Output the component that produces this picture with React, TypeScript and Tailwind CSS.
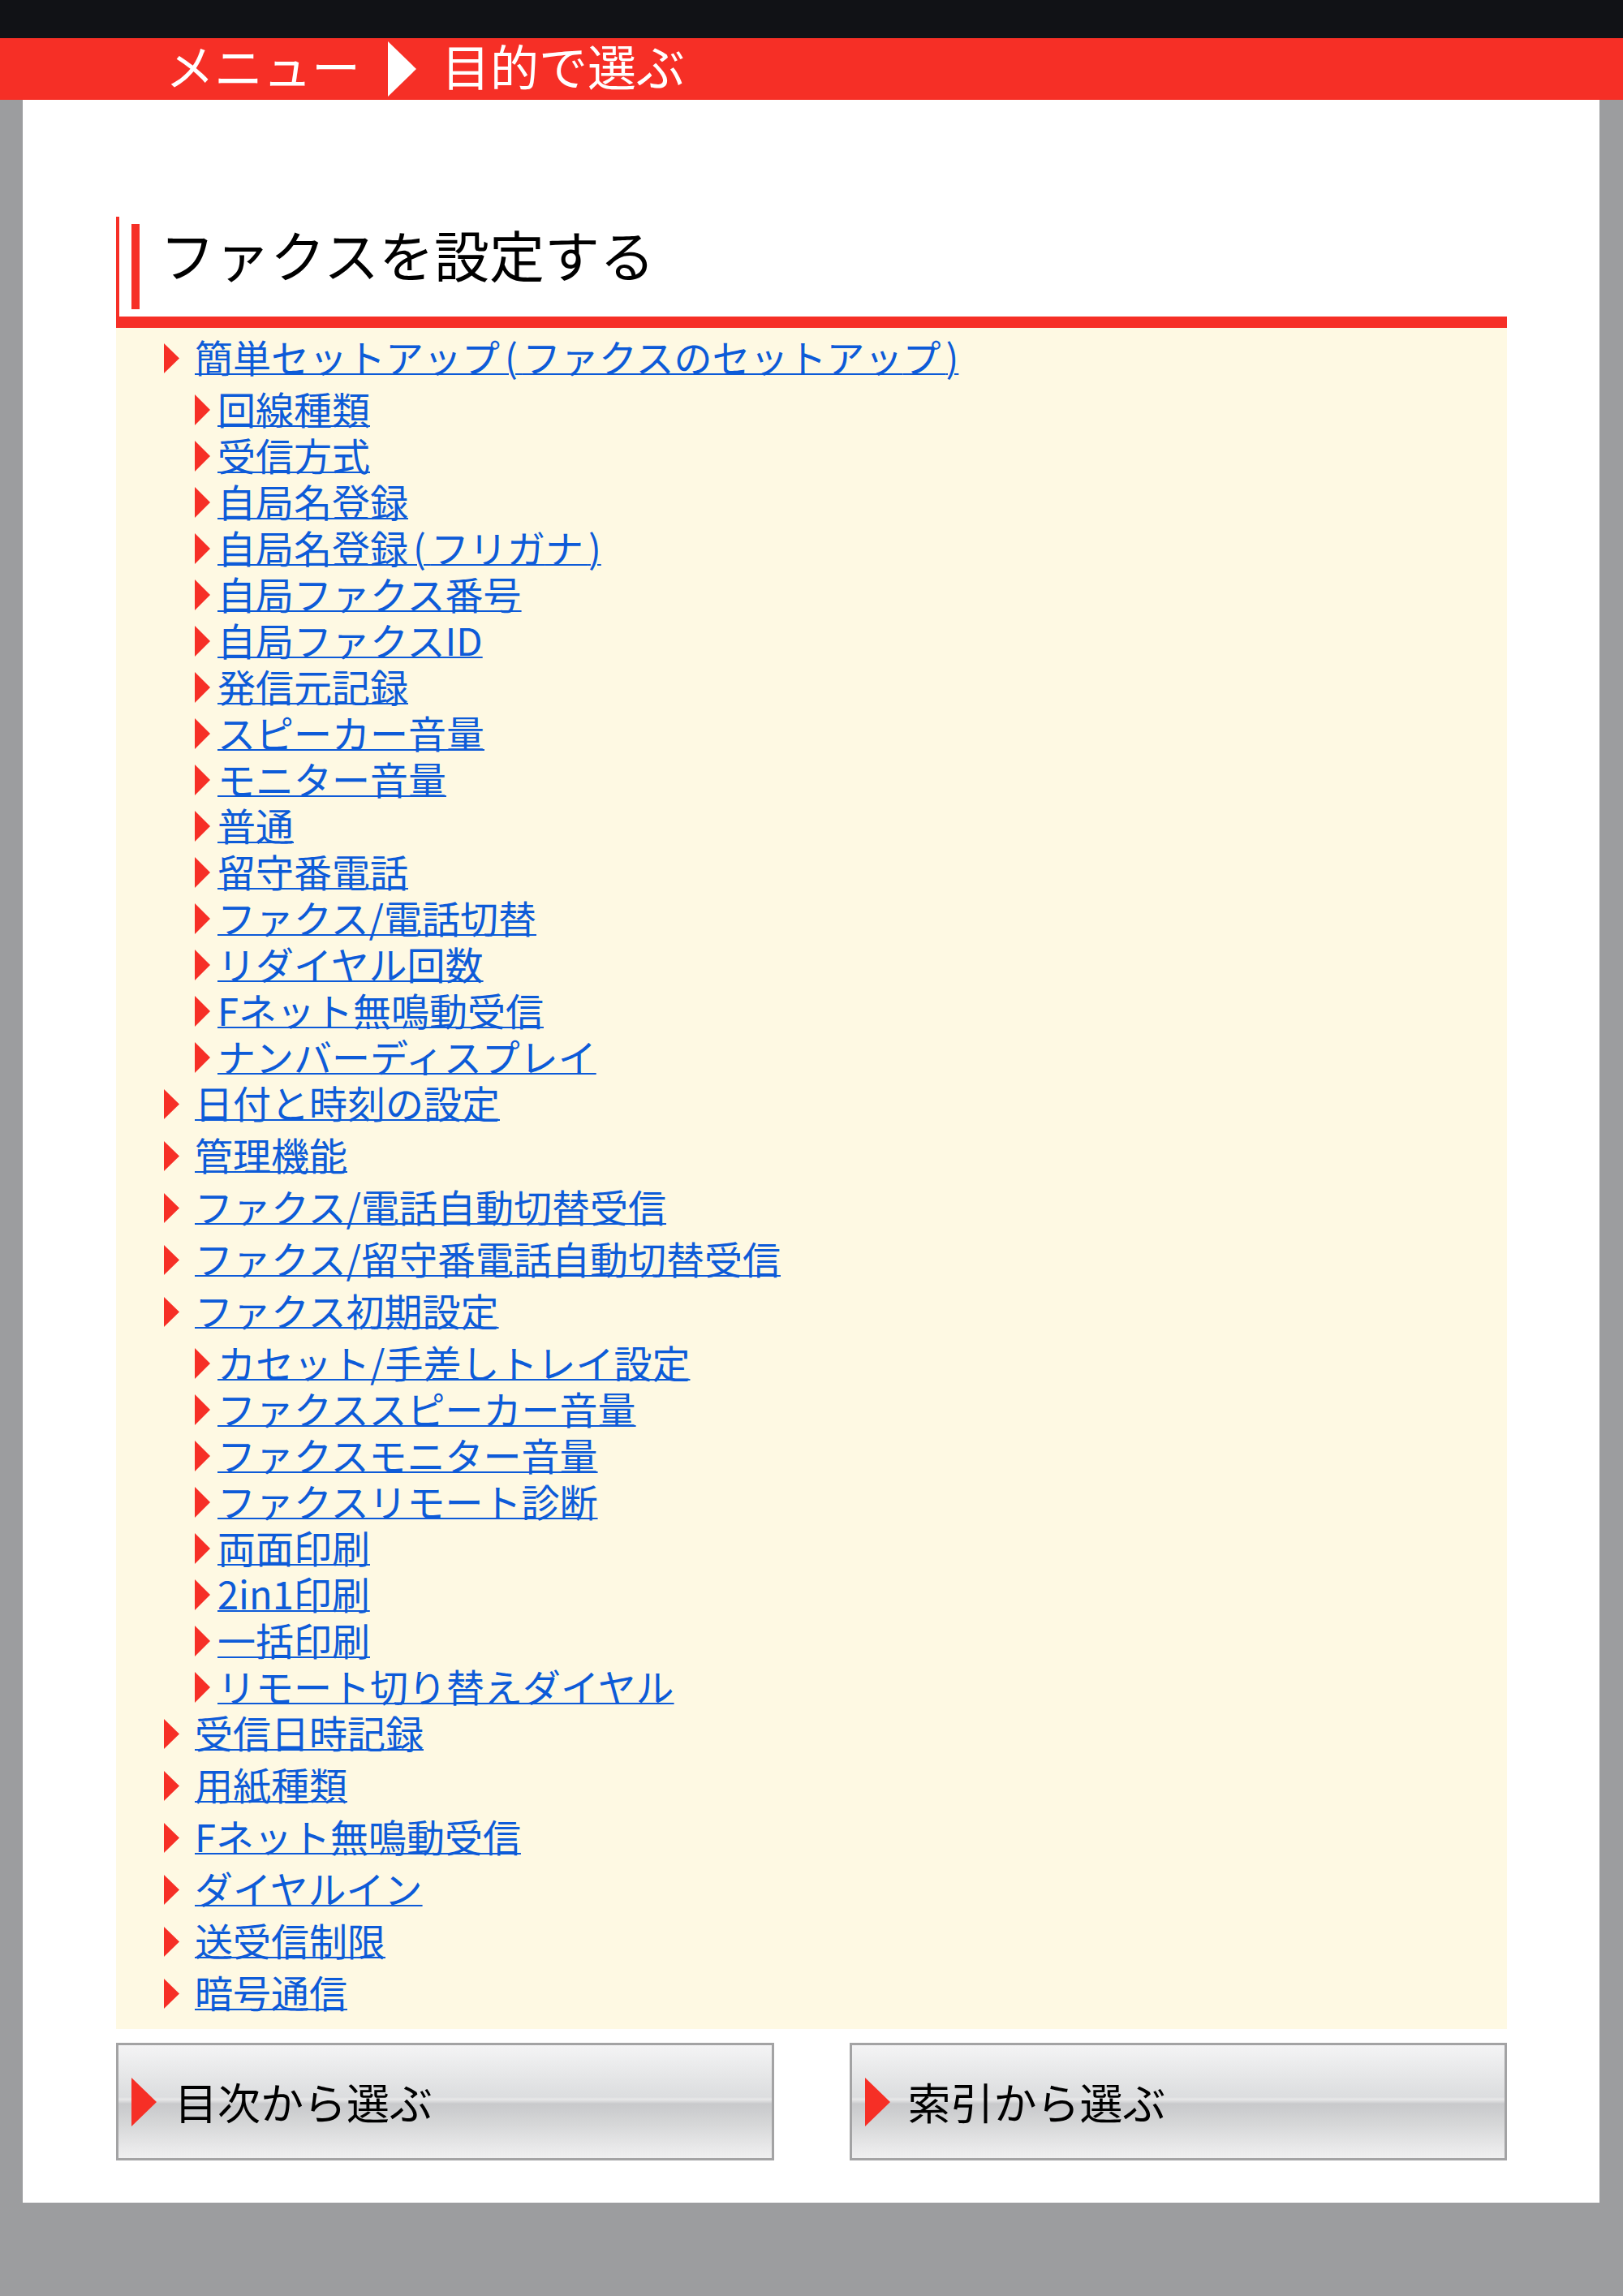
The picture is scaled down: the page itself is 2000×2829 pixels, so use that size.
import React from "react";

type Item = { label: string; children?: string[] };

const items: Item[] = [
  {
    label: "簡単セットアップ(ファクスのセットアップ)",
    children: [
      "回線種類",
      "受信方式",
      "自局名登録",
      "自局名登録(フリガナ)",
      "自局ファクス番号",
      "自局ファクスID",
      "発信元記録",
      "スピーカー音量",
      "モニター音量",
      "普通",
      "留守番電話",
      "ファクス/電話切替",
      "リダイヤル回数",
      "Fネット無鳴動受信",
      "ナンバーディスプレイ",
    ],
  },
  { label: "日付と時刻の設定" },
  { label: "管理機能" },
  { label: "ファクス/電話自動切替受信" },
  { label: "ファクス/留守番電話自動切替受信" },
  {
    label: "ファクス初期設定",
    children: [
      "カセット/手差しトレイ設定",
      "ファクススピーカー音量",
      "ファクスモニター音量",
      "ファクスリモート診断",
      "両面印刷",
      "2in1印刷",
      "一括印刷",
      "リモート切り替えダイヤル",
    ],
  },
  { label: "受信日時記録" },
  { label: "用紙種類" },
  { label: "Fネット無鳴動受信" },
  { label: "ダイヤルイン" },
  { label: "送受信制限" },
  { label: "暗号通信" },
];

const FONT = { fontFamily: '"Noto Sans CJK JP", "Noto Sans", sans-serif' };

// Splits a label into runs; the characters around a parenthesis get a little
// extra tracking so the brackets sit apart from the kana.
function Label({ text }: { text: string }) {
  const chars = Array.from(text);
  const runs: { text: string; spaced: boolean }[] = [];
  chars.forEach((c, i) => {
    const next = chars[i + 1];
    const spaced = c === "(" || next === "(" || next === ")";
    const last = runs[runs.length - 1];
    if (last && last.spaced === spaced) last.text += c;
    else runs.push({ text: c, spaced });
  });
  return (
    <>
      {runs.map((r, i) =>
        r.spaced ? (
          <span key={i} className="tracking-[6px]">
            {r.text}
          </span>
        ) : (
          <React.Fragment key={i}>{r.text}</React.Fragment>
        )
      )}
    </>
  );
}

function Arrow({ w, h, color }: { w: number; h: number; color: string }) {
  return (
    <svg width={w} height={h} viewBox={`0 0 ${w} ${h}`} className="shrink-0 block">
      <polygon points={`0,0 ${w},${h / 2} 0,${h}`} fill={color} />
    </svg>
  );
}

function TopRow({ label }: { label: string }) {
  return (
    <li className="flex items-center h-[57px] mb-[7px] pl-[59px]">
      <span className="mt-[5px]">
        <Arrow w={19} h={37} color="#f62f26" />
      </span>
      <a
        href="#"
        className="ml-[19px] text-[47px] leading-[57px] text-[#0d5bd8] underline decoration-2 whitespace-nowrap"
      >
        <Label text={label} />
      </a>
    </li>
  );
}

function SubRow({ label }: { label: string }) {
  return (
    <li className="flex items-center h-[57px] pl-[97px]">
      <span className="mt-[5px]">
        <Arrow w={19} h={38} color="#f62f26" />
      </span>
      <a
        href="#"
        className="ml-[9px] text-[47px] leading-[57px] text-[#0d5bd8] underline decoration-2 whitespace-nowrap"
      >
        <Label text={label} />
      </a>
    </li>
  );
}

function NavButton({ label }: { label: string }) {
  return (
    <a
      href="#"
      className="flex items-center h-[145px] border-[3px] border-[#a3a3a4] bg-[linear-gradient(to_bottom,#f4f4f5_0%,#e4e5e6_30%,#dcdddf_46%,#e8e8e9_48%,#c8c9cb_52%,#d6d7d8_70%,#e6e6e7_88%,#efeff0_100%)]"
    >
      <span className="ml-[16px]">
        <Arrow w={31} h={60} color="#f62f26" />
      </span>
      <span className="ml-[22px] text-[53px] leading-[53px] text-black">{label}</span>
    </a>
  );
}

export default function App() {
  return (
    <div className="w-[2000px] min-h-[2829px] bg-[#9c9d9f] flex flex-col" style={FONT}>
      {/* top status strip */}
      <div className="h-[47px] bg-[#111216]" />

      {/* breadcrumb header */}
      <header className="h-[76px] bg-[#f62f26] flex items-center pl-[204px] text-white">
        <span className="text-[60px] leading-[60px] pb-[10px]">メニュー</span>
        <span className="ml-[34px]">
          <Arrow w={35} h={68} color="#ffffff" />
        </span>
        <span className="ml-[31px] text-[60px] leading-[60px] pb-[10px]">目的で選ぶ</span>
      </header>

      {/* main sheet */}
      <main className="mx-[28px] mr-[29px] bg-white pt-[144px] pb-[52px] pl-[115px] pr-[114px]">
        <div className="flex h-[137px] border-l-4 border-b-[14px] border-[#f62f26]">
          <div className="ml-[15px] mt-[9px] w-[10px] h-[105px] bg-[#f62f26]" />
          <h1 className="ml-[25px] mt-[12px] text-[68px] leading-[68px] text-black font-normal whitespace-nowrap">
            ファクスを設定する
          </h1>
        </div>

        <ul className="bg-[#fef9e3] pt-[6px] pb-[11px]">
          {items.map((it) => (
            <React.Fragment key={it.label}>
              <TopRow label={it.label} />
              {it.children && (
                <li>
                  <ul>
                    {it.children.map((c) => (
                      <SubRow key={c} label={c} />
                    ))}
                  </ul>
                </li>
              )}
            </React.Fragment>
          ))}
        </ul>

        <div className="grid grid-cols-2 gap-[93px] mt-[17px]">
          <NavButton label="目次から選ぶ" />
          <NavButton label="索引から選ぶ" />
        </div>
      </main>
    </div>
  );
}
